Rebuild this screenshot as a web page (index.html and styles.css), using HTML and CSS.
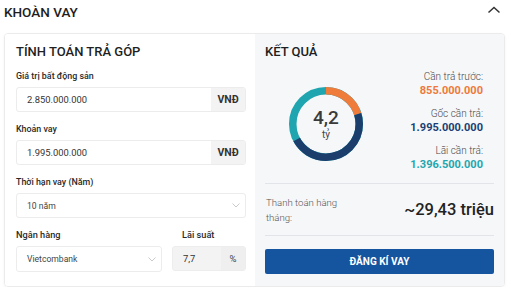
FILE: index.html
```html
<!DOCTYPE html>
<html lang="vi">
<head>
<meta charset="utf-8">
<link rel="stylesheet" href="styles.css">
</head>
<body>
<div class="header">
  <div class="title">KHOÀN VAY</div>
  <svg class="collapse" width="14" height="8" viewBox="0 0 14 8"><polyline points="1.5,6.5 7,1.5 12.5,6.5" fill="none" stroke="#333" stroke-width="1.5"/></svg>
</div>
<div class="card">
  <div class="calc">
    <div class="panel-title">TÍNH TOÁN TRẢ GÓP</div>
    <div class="field">
      <div class="label">Giá trị bất động sản</div>
      <div class="input"><span class="value">2.850.000.000</span><span class="addon">VNĐ</span></div>
    </div>
    <div class="field">
      <div class="label">Khoản vay</div>
      <div class="input"><span class="value">1.995.000.000</span><span class="addon">VNĐ</span></div>
    </div>
    <div class="field">
      <div class="label">Thời hạn vay (Năm)</div>
      <div class="input select"><span class="value">10 năm</span><svg class="chev" width="8" height="5" viewBox="0 0 8 5"><polyline points="0.5,0.5 4,4 7.5,0.5" fill="none" stroke="#c4c4c4" stroke-width="0.9"/></svg></div>
    </div>
    <div class="field-row">
      <div class="field">
        <div class="label big">Ngân hàng</div>
        <div class="input select"><span class="value">Vietcombank</span><svg class="chev" width="8" height="5" viewBox="0 0 8 5"><polyline points="0.5,0.5 4,4 7.5,0.5" fill="none" stroke="#c4c4c4" stroke-width="0.9"/></svg></div>
      </div>
      <div class="field">
        <div class="label big indent">Lãi suất</div>
        <div class="input gray"><span class="value">7,7</span><span class="addon pct">%</span></div>
      </div>
    </div>
  </div>
  <div class="result">
    <div class="panel-title">KẾT QUẢ</div>
    <div class="summary">
      <div class="donut">
        <svg width="74" height="74" viewBox="0 0 74 74">
          <g transform="rotate(-90 37 37)" fill="none" stroke-width="7.5">
            <circle cx="37" cy="37" r="33.25" stroke="#1fa5af" stroke-dasharray="208.9 0"/>
            <circle cx="37" cy="37" r="33.25" stroke="#ef7c3b" stroke-dasharray="42 300"/>
            <circle cx="37" cy="37" r="33.25" stroke="#1b3e6d" stroke-dasharray="0 42 98.2 300"/>
          </g>
        </svg>
        <div class="donut-text"><div class="big-num">4,2</div><div class="unit">tỷ</div></div>
      </div>
      <div class="amounts">
        <div class="amt-label">Cần trả trước:</div>
        <div class="amt orange">855.000.000</div>
        <div class="amt-label">Gốc cần trả:</div>
        <div class="amt navy">1.995.000.000</div>
        <div class="amt-label">Lãi cần trả:</div>
        <div class="amt teal">1.396.500.000</div>
      </div>
    </div>
    <div class="monthly">
      <div class="monthly-label">Thanh toán hàng<br>tháng:</div>
      <div class="monthly-value">~29,43 triệu</div>
    </div>
    <div class="btn">ĐĂNG KÍ VAY</div>
  </div>
</div>
</body>
</html>
```
FILE: styles.css
```css
* { box-sizing: border-box; }
body {
  margin: 0;
  background: #fff;
  font-family: Roboto, "Liberation Sans", Arial, sans-serif;
  color: #222;
}
.header {
  height: 33px;
  padding: 0 11px 0 4px;
  display: flex;
  justify-content: space-between;
  align-items: flex-start;
}
.header .title {
  font-size: 13.5px;
  font-weight: 500;
  line-height: 24px;
  color: #1e1e1e;
}
.collapse { margin-top: 6px; }
.card {
  margin-left: 4px;
  width: 501px;
  height: 254px;
  border: 1px solid #ebebeb;
  border-radius: 4px;
  box-shadow: 0 1px 3px rgba(0,0,0,0.05);
  display: flex;
  overflow: hidden;
}
.calc {
  width: 250px;
  padding: 10px 9px 0 11px;
  background: #fff;
}
.panel-title {
  font-size: 13px;
  font-weight: 500;
  line-height: 16px;
  color: #1f1f1f;
  margin-bottom: 10px;
}
.field { margin-bottom: 11px; }
.label {
  font-size: 8.9px;
  font-weight: 500;
  line-height: 12px;
  margin-bottom: 5px;
  color: #2a2a2a;
}
.label.big { font-size: 9.2px; }
.label.indent { padding-left: 10px; }
.input {
  height: 25px;
  border: 1px solid #ececec;
  border-radius: 3px;
  display: flex;
  align-items: center;
  background: #fff;
  overflow: hidden;
}
.field:first-of-type .input { height: 26px; }
.input .value {
  flex: 1;
  padding-left: 10px;
  font-size: 9.4px;
  color: #333;
}
.input .addon {
  width: 34px;
  align-self: stretch;
  display: flex;
  align-items: center;
  justify-content: center;
  background: #f3f3f3;
  font-size: 10.5px;
  font-weight: 700;
  color: #333;
}
.input.select .value { font-size: 8.6px; color: #444; }
.chev { margin-right: 5px; }
.input.gray { background: #f3f3f3; border-color: #ededed; }
.input .addon.pct {
  width: 24px;
  background: #efefef;
  font-weight: 400;
  font-size: 9.5px;
  color: #444;
}
.field-row {
  display: grid;
  grid-template-columns: 146px 74px;
  column-gap: 10px;
}
.result {
  flex: 1;
  background: #f5f7f9;
  padding: 10px 10px 0 10px;
}
.summary {
  display: flex;
  justify-content: space-between;
  align-items: center;
  padding: 0 11px 0 24px;
  height: 102px;
}
.donut {
  position: relative;
  width: 74px;
  height: 74px;
  margin-top: 6px;
}
.donut svg { display: block; }
.donut-text {
  position: absolute;
  inset: 0;
  display: flex;
  flex-direction: column;
  align-items: center;
  justify-content: center;
  color: #3a3a3a;
}
.big-num {
  font-size: 19px;
  font-weight: 500;
  line-height: 20px;
}
.unit {
  font-size: 10px;
  line-height: 12px;
  margin-top: 1px;
  color: #444;
}
.amounts { text-align: right; }
.amt-label {
  font-size: 10px;
  font-weight: 300;
  line-height: 14px;
  color: #4a4a4a;
}
.amt {
  font-size: 11px;
  font-weight: 700;
  line-height: 14px;
  margin-bottom: 9px;
}
.amt:last-child { margin-bottom: 0; }
.orange { color: #ee7a3a; }
.navy { color: #1b3f74; }
.teal { color: #1fa6ae; }
.monthly {
  margin-top: 11px;
  height: 53px;
  border-top: 1px solid #e1e5ea;
  border-bottom: 1px solid #e1e5ea;
  display: flex;
  justify-content: space-between;
  align-items: center;
}
.monthly-label {
  padding-left: 1px;
  font-size: 9.6px;
  font-weight: 300;
  line-height: 15px;
  color: #555;
}
.monthly-value {
  font-size: 16.5px;
  font-weight: 500;
  color: #222;
}
.btn {
  margin-top: 13px;
  height: 25px;
  border-radius: 2px;
  background: #15549f;
  color: #fff;
  font-size: 10px;
  font-weight: 700;
  display: flex;
  align-items: center;
  justify-content: center;
}
```
